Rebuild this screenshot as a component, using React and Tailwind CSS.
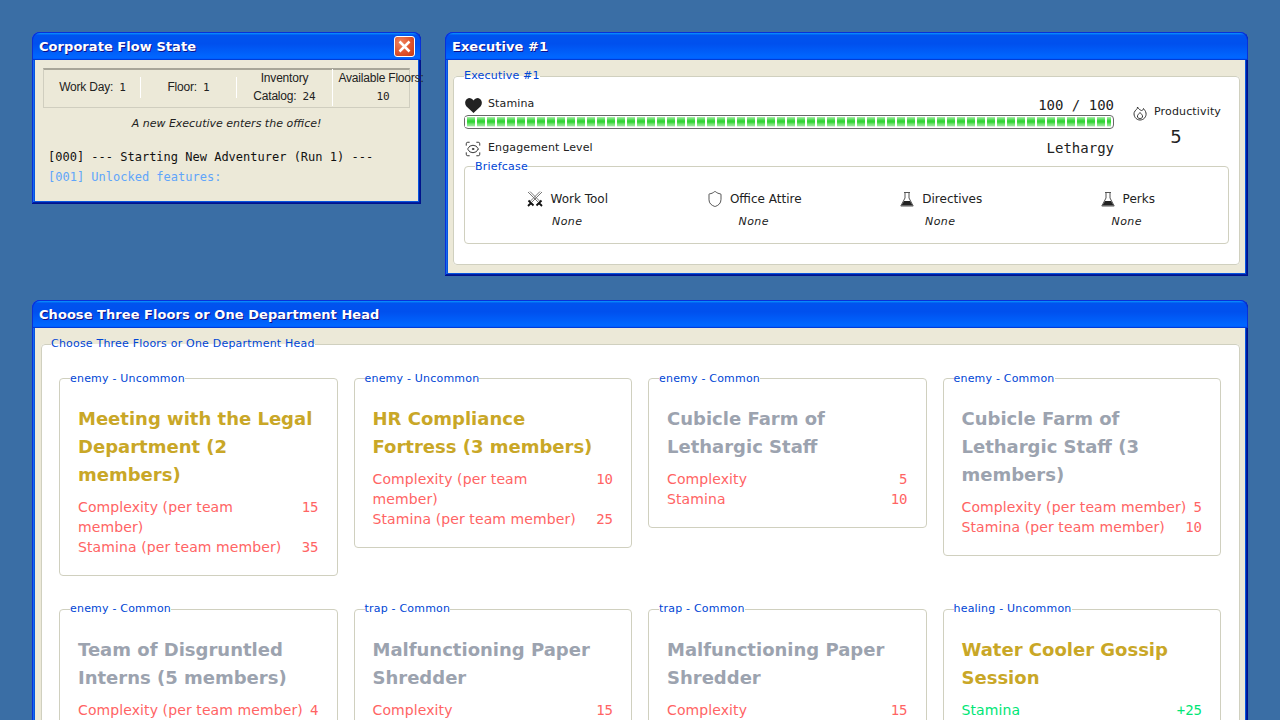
import React from "react";
import { ScanEye, Shield } from "lucide-react";

const row1 = [
  { legend: "enemy - Uncommon", title: "Meeting with the Legal Department (2 members)", tone: "gold", stats: [["Complexity (per team member)", "15"], ["Stamina (per team member)", "35"]] },
  { legend: "enemy - Uncommon", title: "HR Compliance Fortress (3 members)", tone: "gold", stats: [["Complexity (per team member)", "10"], ["Stamina (per team member)", "25"]] },
  { legend: "enemy - Common", title: "Cubicle Farm of Lethargic Staff", tone: "gray", stats: [["Complexity", "5"], ["Stamina", "10"]] },
  { legend: "enemy - Common", title: "Cubicle Farm of Lethargic Staff (3 members)", tone: "gray", stats: [["Complexity (per team member)", "5"], ["Stamina (per team member)", "10"]] },
];

const row2 = [
  { legend: "enemy - Common", title: "Team of Disgruntled Interns (5 members)", tone: "gray", stats: [["Complexity (per team member)", "4"]] },
  { legend: "trap - Common", title: "Malfunctioning Paper Shredder", tone: "gray", stats: [["Complexity", "15"]] },
  { legend: "trap - Common", title: "Malfunctioning Paper Shredder", tone: "gray", stats: [["Complexity", "15"]] },
  { legend: "healing - Uncommon", title: "Water Cooler Gossip Session", tone: "gold", heal: true, stats: [["Stamina", "+25"]] },
];

function Window({ title, closable, className, children }) {
  return (
    <div className={`rounded-t-lg bg-[#ece9d8] pb-[3px] shadow-[inset_-1px_-1px_#00138c,inset_1px_1px_#0831d9,inset_-2px_-2px_#001ea0,inset_2px_2px_#166aee,inset_-3px_-3px_#0855dd,inset_3px_3px_#0855dd] ${className}`}>
      <div className="flex h-7 items-center justify-between rounded-t-lg border-x border-t border-x-[#0831d9] border-t-[#0831d9] bg-[linear-gradient(180deg,#0997ff,#0053ee_8%,#0050ee_40%,#06f_88%,#06f_93%,#005bff_95%,#003dd7_96%,#003dd7)] pl-[6px] pr-[5px]">
        <span className="text-[13px] font-bold tracking-[0.05px] text-white [text-shadow:1px_1px_#0f1089]">{title}</span>
        {closable && (
          <button className="flex h-[21px] w-[21px] items-center justify-center rounded-[3px] border border-white bg-[radial-gradient(circle_at_30%_30%,#f0845f,#e0532c_55%,#c33a15)]">
            <svg width="15" height="15" viewBox="0 0 15 15">
              <path d="M2.500 2.500l10 10M12.500 2.500l-10 10" stroke="#fff" strokeWidth="2.500" />
            </svg>
          </button>
        )}
      </div>
      {children}
    </div>
  );
}

function Fieldset({ legend, className = "", legendClass = "", children }) {
  return (
    <fieldset className={`rounded border border-[#d0d0bf] bg-white p-[10px] ${className}`}>
      <legend className={`text-[11px] tracking-[0.2px] text-[#0046d5] ${legendClass}`}>{legend}</legend>
      {children}
    </fieldset>
  );
}

function StatusCell({ children, tall, last }) {
  return (
    <div className={`w-24 shrink-0 border-white px-1 text-center font-['Liberation_Sans',sans-serif] text-[12px] leading-[18px] tracking-[-0.2px] text-[#222] ${tall ? "py-0" : "py-px"} ${last ? "" : "border-r"}`}>
      {children}
    </div>
  );
}

function Num({ children, gap = "ml-[6px]" }) {
  return <span className={`font-['DejaVu_Sans_Mono',monospace] text-[11px] tracking-normal ${gap}`}>{children}</span>;
}

function IconBox({ children }) {
  return <span className="flex h-[18px] w-[18px] shrink-0 items-center justify-center">{children}</span>;
}

function Heart() {
  return (
    <svg width="17" height="15" viewBox="0 0 17 15">
      <path d="M8.500 15 1.500 8.500C-1 5.500 0 1 4 0c2 0 3.500 1 4.500 2.500C9.500 1 11 0 13 0c4 1 5 5.500 2.500 8.500z" fill="#222" />
    </svg>
  );
}

function Swords() {
  return (
    <svg width="16" height="16" viewBox="0 0 16 16" fill="none">
      <path d="M1 1l10 10M3 0.5l9.500 9.500M15 1L5 11M13 0.5L3.500 10" stroke="#777" strokeWidth="1" />
      <path d="M1.500 9.500l5 5M14.500 9.500l-5 5M4 12l-3 3M12 12l3 3" stroke="#111" strokeWidth="1.800" />
    </svg>
  );
}

function Flask() {
  return (
    <svg width="14" height="15" viewBox="0 0 14 15" fill="none">
      <path d="M4 .5h6M5 .5v5.500L.8 14h12.400L9 6V.5" stroke="#555" strokeWidth="1" />
      <path d="M4 9h6l2.600 4.500H1.400z" fill="#222" />
    </svg>
  );
}

function Flame() {
  return (
    <svg width="14" height="15" viewBox="0 0 14 15" fill="none" stroke="#333" strokeWidth="1">
      <path d="M4.500 1C5 3 2 4 1.200 6.500.3 10 3 14 7 14s6.600-3.500 6-7C12.600 5 11.500 4 10.500 2.500 10 4 9.500 4.500 8.500 4.500 7 4 5.500 3 4.500 1z" />
      <path d="M4.500 11c-.5-2 1.500-3 2.500-4.500 1 1.500 3 2.500 2.500 4.500C9 13 5 13 4.500 11z" />
    </svg>
  );
}

function Slot({ icon, label }) {
  return (
    <div className="flex flex-col items-center">
      <div className="flex h-5 items-center gap-[6px] text-[12px] text-[#222]">
        <IconBox>{icon}</IconBox>
        <span>{label}</span>
      </div>
      <div className="mt-[3px] h-5 text-[11px] italic leading-5 tracking-[0.4px] text-[#222]">None</div>
    </div>
  );
}

function FloorCard({ legend, title, tone, stats, heal }) {
  return (
    <Fieldset legend={legend}>
      <div className="p-2">
        <h3 className={`text-lg font-bold leading-7 ${tone === "gold" ? "text-[#c9a727]" : "text-[#9ca3af]"}`}>{title}</h3>
        <div className={`mt-2 text-sm leading-5 ${heal ? "text-[#00e676]" : "text-[#ff6464]"}`}>
          {stats.map(([label, value]) => (
            <div key={label} className="flex justify-between gap-[7px]">
              <span className="tracking-[0.1px]">{label}</span>
              <span className="font-['DejaVu_Sans_Mono',monospace]">{value}</span>
            </div>
          ))}
        </div>
      </div>
    </Fieldset>
  );
}

export default function App() {
  return (
    <div className="flex h-screen flex-col gap-6 overflow-hidden bg-[#3a6ea5] p-8 font-['DejaVu_Sans',sans-serif] text-[11px]">
      <div className="flex items-start gap-6">
        <Window title="Corporate Flow State" closable className="w-[389px]">
          <div className="mx-[3px] px-2 pb-[14px] pt-2">
            <div className="flex h-10 items-center border border-[#d0cebf] border-t-[#a8a699] pb-[2px] pl-px [border-top-width:2px]">
              <StatusCell>Work Day:<Num>1</Num></StatusCell>
              <StatusCell>Floor:<Num>1</Num></StatusCell>
              <StatusCell tall>Inventory<br />Catalog:<Num>24</Num></StatusCell>
              <StatusCell tall last><span className="whitespace-nowrap">Available Floors:</span><br /><Num gap="ml-1">10</Num></StatusCell>
            </div>
            <p className="mt-[9px] text-center text-[11px] italic leading-[14px] text-[#222]">A new Executive enters the office!</p>
            <div className="mt-4 px-[5px] font-['DejaVu_Sans_Mono',monospace] text-xs leading-5">
              <div className="text-[#111]">[000] --- Starting New Adventurer (Run 1) ---</div>
              <div className="text-[#60a5fa]">[001] Unlocked features:</div>
            </div>
          </div>
        </Window>

        <Window title="Executive #1" className="flex-1">
          <div className="mx-[3px] px-[5px] pb-2 pt-2">
            <Fieldset legend="Executive #1" className="pb-5">
              <div className="flex gap-[17px]">
                <div className="w-[650px]">
                  <div className="flex h-[18px] items-end justify-between">
                    <div className="-mb-[2px] flex items-center gap-[6px] text-[#222]">
                      <IconBox><Heart /></IconBox>
                      <span className="-mt-[2px] tracking-[0.13px]">Stamina</span>
                    </div>
                    <span className="font-['DejaVu_Sans_Mono',monospace] text-sm leading-4 text-[#222]">100 / 100</span>
                  </div>
                  <div className="mt-[2px] h-[14px] rounded border border-[#686868] py-px pr-[2px]">
                    <div className="h-full w-full bg-[repeating-linear-gradient(90deg,#fff_0,#fff_2px,transparent_2px,transparent_10px),linear-gradient(180deg,#acedad_0,#7be47d_14%,#4cda50_28%,#2ed330_42%,#42d845_57%,#76e275_71%,#8fe791_85%,#fff)]" />
                  </div>
                  <div className="mt-[10px] flex h-5 items-center justify-between">
                    <div className="flex items-center gap-[6px] text-[#222]">
                      <IconBox><ScanEye size={18} strokeWidth={1.3} color="#333" /></IconBox>
                      <span className="tracking-[0.13px]">Engagement Level</span>
                    </div>
                    <span className="self-start font-['DejaVu_Sans_Mono',monospace] text-sm leading-[18px] text-[#222]">Lethargy</span>
                  </div>
                </div>
                <div className="flex flex-col items-center text-[#222]">
                  <div className="mt-[7px] flex items-center gap-[5px]">
                    <span className="mt-[3px]"><IconBox><Flame /></IconBox></span>
                    <span className="tracking-[0.15px]">Productivity</span>
                  </div>
                  <div className="mt-[2px] text-lg leading-6">5</div>
                </div>
              </div>
              <Fieldset legend="Briefcase" className="pb-[11px]">
                <div className="-ml-px -mr-[2px] grid grid-cols-4 pt-1">
                  <Slot icon={<Swords />} label="Work Tool" />
                  <Slot icon={<Shield size={18} strokeWidth={1.1} color="#333" />} label="Office Attire" />
                  <Slot icon={<Flask />} label="Directives" />
                  <Slot icon={<Flask />} label="Perks" />
                </div>
              </Fieldset>
            </Fieldset>
          </div>
        </Window>
      </div>

      <Window title="Choose Three Floors or One Department Head" className="shrink-0">
        <div className="mx-[3px] pb-2 pl-[6px] pr-[5px] pt-2">
          <Fieldset legend="Choose Three Floors or One Department Head" legendClass="-ml-px">
            <div className="pb-2 pl-[7px] pr-2 pt-2">
              <div className="grid grid-cols-4 items-start gap-x-4 gap-y-[25px]">
                {row1.concat(row2).map((card, i) => (
                  <FloorCard key={i} {...card} />
                ))}
              </div>
            </div>
          </Fieldset>
        </div>
      </Window>
    </div>
  );
}
